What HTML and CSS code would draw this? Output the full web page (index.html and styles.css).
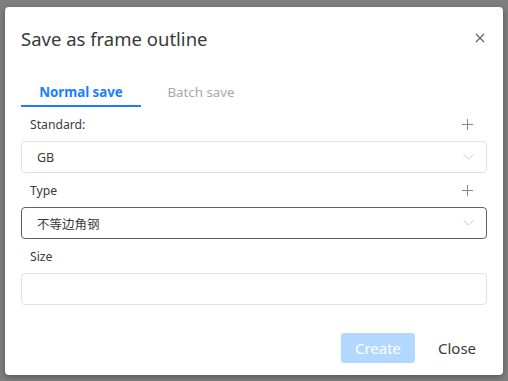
FILE: index.html
```html
<!DOCTYPE html>
<html>
<head>
<meta charset="utf-8">
<link rel="stylesheet" href="styles.css">
</head>
<body>
<div class="dialog">
  <div class="header">
    <div class="title">Save as frame outline</div>
    <svg class="close-x" width="10" height="10" viewBox="0 0 10 10"><path d="M1 1L9 9M9 1L1 9" stroke="#666" stroke-width="1.3" fill="none"/></svg>
  </div>
  <div class="tabs">
    <div class="tab active">Normal save</div>
    <div class="tab">Batch save</div>
  </div>
  <div class="row">
    <span class="label">Standard:</span>
    <svg class="plus" width="11" height="11" viewBox="0 0 11 11"><path d="M5.5 0V11M0 5.5H11" stroke="#888" stroke-width="1" fill="none"/></svg>
  </div>
  <div class="select">
    <span class="value">GB</span>
    <svg class="chev" width="11" height="6" viewBox="0 0 11 6"><path d="M0.5 0.5L5.5 5L10.5 0.5" stroke="#c8c8c8" stroke-width="1" fill="none"/></svg>
  </div>
  <div class="row">
    <span class="label">Type</span>
    <svg class="plus" width="11" height="11" viewBox="0 0 11 11"><path d="M5.5 0V11M0 5.5H11" stroke="#888" stroke-width="1" fill="none"/></svg>
  </div>
  <div class="select focus">
    <span class="value">不等边角钢</span>
    <svg class="chev" width="11" height="6" viewBox="0 0 11 6"><path d="M0.5 0.5L5.5 5L10.5 0.5" stroke="#c8c8c8" stroke-width="1" fill="none"/></svg>
  </div>
  <div class="row">
    <span class="label">Size</span>
  </div>
  <div class="select input"></div>
  <div class="footer">
    <div class="btn create">Create</div>
    <div class="btn plain">Close</div>
  </div>
</div>
</body>
</html>
```
FILE: styles.css
```css
html, body {
  margin: 0;
  padding: 0;
}
body {
  background: #7f7f7f;
  width: 508px;
  height: 381px;
  overflow: hidden;
  font-family: "Noto Sans", "Noto Sans CJK SC", sans-serif;
  color: #333;
  padding-top: 7px;
  box-sizing: border-box;
}
.dialog {
  margin-left: 5px;
  width: 498px;
  height: 368px;
  background: #fff;
  border-radius: 4px;
  box-shadow: 0 2px 6px rgba(0,0,0,0.35);
  padding: 0 16px;
  box-sizing: border-box;
  display: flex;
  flex-direction: column;
}
.header {
  height: 62px;
  display: flex;
  align-items: center;
  justify-content: space-between;
  padding-right: 2px;
}
.title {
  font-size: 18.5px;
  color: #3a3a3a;
}
.close-x {
  display: block;
}
.tabs {
  margin-top: 11px;
  display: flex;
}
.tab {
  width: 120px;
  text-align: center;
  font-size: 13.3px;
  line-height: 25px;
  border-bottom: 2px solid transparent;
  color: #a8a8a8;
}
.tab.active {
  color: #1a7eff;
  font-weight: bold;
  border-bottom-color: #1a7eff;
}
.row {
  height: 34px;
  display: flex;
  align-items: center;
  justify-content: space-between;
  padding-left: 9px;
  padding-right: 14px;
}
.label {
  font-size: 12.2px;
  color: #3a3a3a;
}
.plus {
  display: block;
}
.select {
  height: 32px;
  border: 1px solid #e0e0e6;
  border-radius: 4px;
  box-sizing: border-box;
  display: flex;
  align-items: center;
  justify-content: space-between;
  padding-left: 15px;
  padding-right: 12px;
}
.select.focus {
  border-color: #606060;
}
.value {
  font-size: 12.5px;
  color: #3a3a3a;
}
.chev {
  display: block;
}
.footer {
  margin-top: 28px;
  display: flex;
  justify-content: flex-end;
  align-items: center;
  gap: 12px;
  padding-right: 0;
}
.btn {
  height: 30px;
  line-height: 30px;
  font-size: 15px;
  border-radius: 3px;
  text-align: center;
}
.btn.create {
  width: 74px;
  background: #b3d8ff;
  color: #fff;
}
.btn.plain {
  width: 60px;
  color: #3a3a3a;
}
```
